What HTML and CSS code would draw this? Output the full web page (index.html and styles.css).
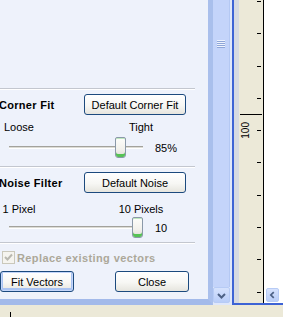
FILE: index.html
```html
<html>
<head>
<title>Fit Vectors</title>
<meta http-equiv="Content-Type" content="text/html; charset=UTF-8" />
<link rel="stylesheet" href="styles.css">
</head>
<body>

<div class="app">
  <div class="main">

    <!-- dialog -->
    <div class="dialog">
      <div class="spacer"></div>
      <div class="sep"></div>

      <div class="group-head">
        <span class="group-title">Corner Fit</span>
        <button class="btn">Default Corner Fit</button>
      </div>
      <div class="scale"><span>Loose</span><span></span><span>Tight</span></div>
      <div class="slider">
        <div class="track"><span class="knob knob-corner"></span></div>
        <span class="value">85%</span>
      </div>

      <div class="sep sep-noise"></div>

      <div class="group-head">
        <span class="group-title">Noise Filter</span>
        <button class="btn">Default Noise</button>
      </div>
      <div class="scale scale-noise"><span>1 Pixel</span><span></span><span>10 Pixels</span></div>
      <div class="slider slider-noise">
        <div class="track"><span class="knob knob-noise"></span></div>
        <span class="value">10</span>
      </div>

      <div class="sep sep-bottom"></div>

      <div class="check">
        <span class="box">
          <svg width="11" height="11" viewBox="0 0 11 11"><path d="M2 5 L4.5 7.5 L9 2.5" fill="none" stroke="#b9b8b0" stroke-width="2"/></svg>
        </span>
        <span class="check-label">Replace existing vectors</span>
      </div>

      <div class="actions">
        <button class="btn btn-default">Fit Vectors</button>
        <button class="btn btn-close">Close</button>
      </div>
    </div>

    <!-- vertical scrollbar -->
    <div class="vscroll">
      <div class="vthumb"><span class="grip"></span></div>
      <div class="sbtn sbtn-down">
        <svg width="15" height="15" viewBox="0 0 15 15"><path d="M4 6 L7.5 9.5 L11 6" fill="none" stroke="#4d6185" stroke-width="2"/></svg>
      </div>
    </div>

    <!-- document view -->
    <div class="view">
      <div class="gutter"></div>
      <div class="ruler">
        <span class="major"></span>
        <span class="ruler-num">100</span>
      </div>
      <div class="canvas">
        <div class="canvas-area"></div>
        <div class="hscroll">
          <div class="sbtn sbtn-left">
            <svg width="13" height="14" viewBox="0 0 13 14"><path d="M8 3.5 L4.5 7 L8 10.5" fill="none" stroke="#4d6185" stroke-width="2"/></svg>
          </div>
        </div>
      </div>
    </div>

  </div>
  <div class="status"><span class="caret"></span></div>
</div>

</body>
</html>
```

FILE: styles.css
```css
body{
   margin:0;
   background:#ece9d8;
   font-family:"Liberation Sans", Arial, sans-serif;
   font-size:11px;
   color:#000;
}
.app{
   width:283px;
   height:317px;
   overflow:hidden;
   display:flex;
   flex-direction:column;
}
.main{
   display:flex;
   height:305px;
   flex:none;
}

/* dialog */
.dialog{
   width:213px;
   height:305px;
   box-sizing:border-box;
   flex:none;
   background:#eef2fb;
   border-right:5px solid #a9bfec;
   border-bottom:6px solid #a3baea;
   display:flex;
   flex-direction:column;
}
.spacer{
   height:88px;
   flex:none;
}
.sep{
   width:195px;
   height:1px;
   flex:none;
   background:#c3c7cf;
   border-bottom:1px solid #fff;
}
.sep-noise{ margin-top:8px; }
.sep-bottom{ margin-top:4px; }
.group-head{
   display:grid;
   grid-template-columns:84px 102px;
   align-items:center;
   margin-top:4px;
   height:21px;
}
.group-title{
   font-weight:bold;
   margin-left:-1px;
   letter-spacing:0.3px;
}
.btn{
   height:21px;
   box-sizing:border-box;
   padding:0;
   font-family:"Liberation Sans", Arial, sans-serif;
   font-size:11px;
   color:#000;
   border:1px solid #1c4a7e;
   border-radius:3px;
   background:linear-gradient(to bottom, #ffffff 0%, #f7f7f4 55%, #e6e5de 100%);
}
.scale{
   display:grid;
   grid-template-columns:38px 78px 50px;
   text-align:center;
   line-height:13px;
   margin-top:6px;
}
.scale-noise{ margin-top:10px; }
.slider{
   display:flex;
   align-items:center;
   height:21px;
   margin-top:3px;
}
.slider-noise{ margin-top:1px; }
.track{
   position:relative;
   margin-left:9px;
   width:134px;
   height:1px;
   background:#dcdcd6;
   border-top:1px solid #a3a29c;
   border-bottom:1px solid #fff;
}
.knob{
   position:absolute;
   top:-10px;
   width:11px;
   height:21px;
   box-sizing:border-box;
   border:1px solid #8b99a9;
   border-radius:2px 2px 3px 3px;
   background:linear-gradient(to bottom, #fdfdfb 0%, #f2f1ec 60%, #dcdbd3 100%);
   box-shadow:inset 0 -3px 0 #55c255, inset 0 1px 0 #bfe8bf;
}
.knob-corner{ left:106px; }
.knob-noise{ left:123px; }
.value{
   margin-left:12px;
}
.check{
   display:flex;
   align-items:center;
   margin-top:7px;
   height:13px;
}
.box{
   margin-left:2px;
   width:13px;
   height:13px;
   box-sizing:border-box;
   border:1px solid #cac8bb;
   background:#f5f4ef;
   display:flex;
   align-items:center;
   justify-content:center;
}
.check-label{
   margin-left:2px;
   font-weight:bold;
   letter-spacing:0.4px;
   color:#aca899;
}
.actions{
   display:flex;
   margin-top:7px;
}
.btn-default{
   width:74px;
   box-shadow:inset 0 0 0 1px #c4d6fa, inset 0 -1px 0 2px #a9c3f2;
}
.btn-close{
   width:74px;
   margin-left:41px;
}

/* scrollbars */
.vscroll{
   width:19px;
   flex:none;
   background:#dfe7fa;
   display:flex;
   flex-direction:column;
}
.vthumb{
   width:17px;
   flex:1;
   box-sizing:border-box;
   background:#c4d4fa;
   border-right:1px solid #b4c8f3;
   padding-top:40px;
}
.grip{
   display:block;
   margin-left:4px;
   width:8px;
   height:8px;
   background:repeating-linear-gradient(to bottom, #eef3fe 0 1px, #8fa6d8 1px 2px);
}
.sbtn{
   box-sizing:border-box;
   border:1px solid #b7cbf5;
   border-radius:2px;
   background:linear-gradient(to bottom, #d6e2fd, #b9cdf8);
   display:flex;
   align-items:center;
   justify-content:center;
}
.sbtn-down{
   width:17px;
   height:16px;
   margin-bottom:2px;
}

/* view */
.view{
   flex:1;
   display:flex;
   height:305px;
   box-sizing:border-box;
   border-left:2px solid #3d63d5;
   border-bottom:2px solid #3d63d5;
}
.gutter{
   width:5px;
   background:#d5d9e2;
}
.ruler{
   position:relative;
   width:24px;
   border-right:1px solid #000;
   background:#ece9d8 repeating-linear-gradient(to bottom, #000 0 1px, transparent 1px 32.3px) 18px 1px / 4px 100% no-repeat;
}
.major{
   position:absolute;
   left:1px;
   top:114px;
   width:22px;
   height:1px;
   background:#000;
}
.ruler-num{
   position:absolute;
   left:2px;
   top:122px;
   font-size:10px;
   line-height:10px;
   writing-mode:vertical-rl;
   transform:rotate(180deg);
}
.canvas{
   flex:1;
   background:#fff;
   display:flex;
   flex-direction:column;
}
.canvas-area{
   flex:1;
}
.hscroll{
   height:15px;
   padding-left:2px;
}
.sbtn-left{
   width:13px;
   height:14px;
}

/* status */
.status{
   flex:1;
   position:relative;
}
.caret{
   position:absolute;
   left:10px;
   top:7px;
   width:1px;
   height:5px;
   background:#000;
}
```
